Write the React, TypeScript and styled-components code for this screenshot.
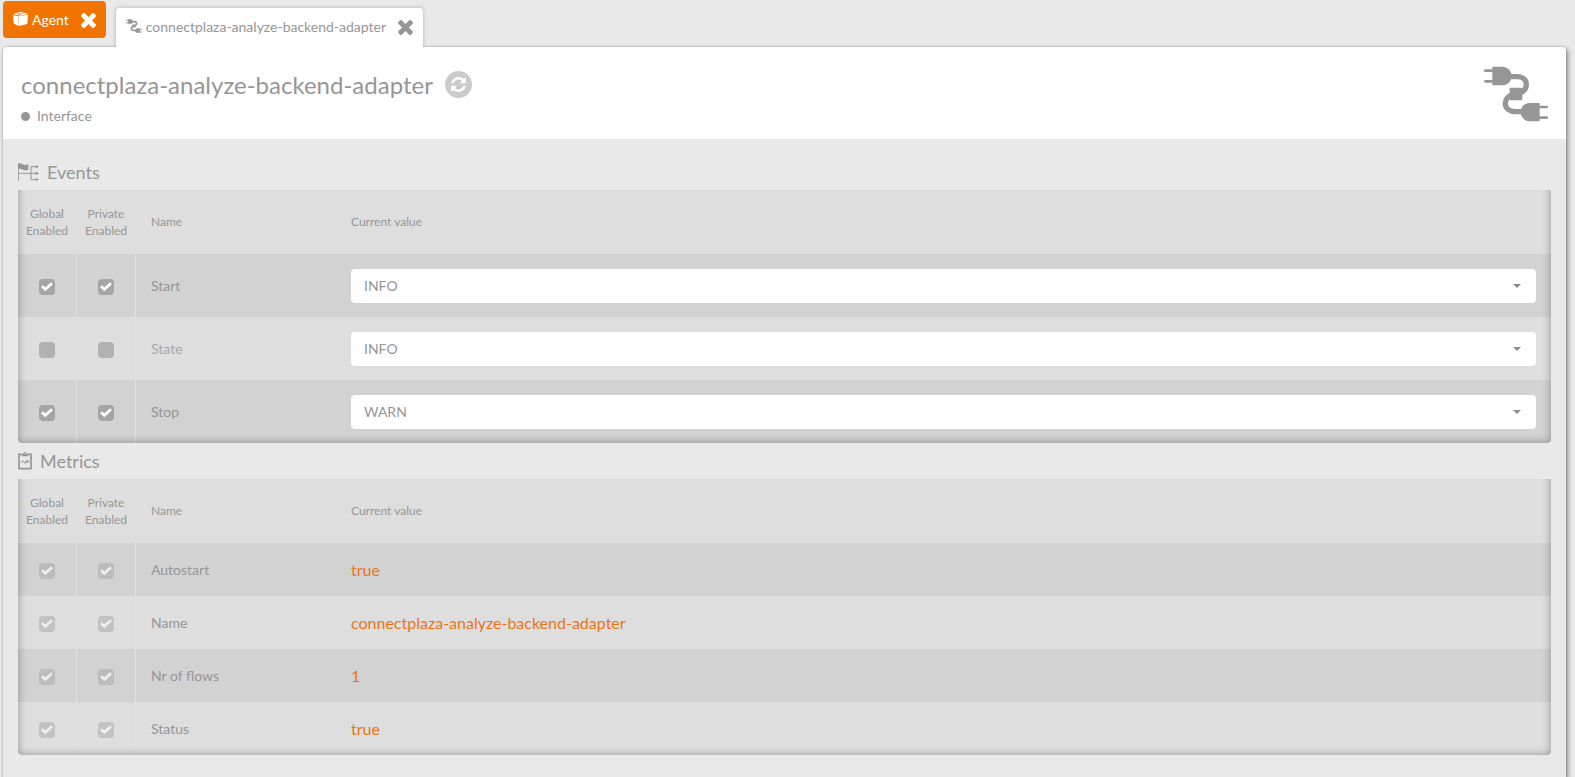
import React, { useState } from 'react';
import styled, { createGlobalStyle } from 'styled-components';

const GlobalStyle = createGlobalStyle`
  *, *::before, *::after { box-sizing: border-box; }
  body {
    margin: 0;
    background: #e9e9e9;
    color: #969696;
    font-family: Lato, "Liberation Sans", sans-serif;
    font-size: 14px;
    line-height: 20px;
  }
  button, select, input { font: inherit; color: inherit; margin: 0; }
`;

const Page = styled.div`
  display: flex;
  flex-direction: column;
  min-height: 100vh;
  padding: 1px 9px 0 3px;
`;

const TabBar = styled.nav`
  display: flex;
  align-items: flex-start;
  gap: 10px;
`;

const Tab = styled.div<{ $active?: boolean }>`
  display: flex;
  align-items: flex-start;
  position: relative;
  z-index: 1;
  height: ${p => (p.$active ? 39 : 37)}px;
  margin-top: ${p => (p.$active ? 7 : 0)}px;
  padding: 9px 10px 0;
  border-radius: ${p => (p.$active ? '4px 4px 0 0' : '4px')};
  background: ${p => (p.$active ? '#fff' : '#f17400')};
  color: ${p => (p.$active ? '#969696' : '#fff')};
  box-shadow: ${p => (p.$active ? '0 0 4px rgba(0, 0, 0, 0.25)' : 'none')};
  clip-path: ${p => (p.$active ? 'inset(-6px -6px 0 -6px)' : 'none')};
`;

const TabLink = styled.a`
  display: flex;
  align-items: flex-start;
  gap: 4px;
  color: inherit;
  text-decoration: none;

  svg { margin-top: 2px; }
`;

const CloseButton = styled.button`
  display: flex;
  margin-left: 12px;
  padding: 3px 0 0;
  border: 0;
  background: none;
  cursor: pointer;
`;

const Panel = styled.main`
  flex: 1;
  border-radius: 4px 4px 0 0;
  background: #e9e9e9;
  box-shadow: 0 0 2px rgba(0, 0, 0, 0.3), 2px 2px 5px rgba(0, 0, 0, 0.4);
`;

const PanelHeader = styled.header`
  display: flex;
  justify-content: space-between;
  align-items: flex-start;
  padding: 19px 18px 13px;
  border-radius: 4px 4px 0 0;
  background: #fff;
`;

const Heading = styled.div`
  display: flex;
  flex-direction: column;
  gap: 7px;
  padding-top: 5px;
`;

const TitleRow = styled.div`
  display: flex;
  align-items: flex-start;
  gap: 12px;
  height: 28px;
`;

const Title = styled.h1`
  margin: 0;
  font-size: 24px;
  font-weight: 400;
  line-height: 28px;
`;

const RefreshButton = styled.button`
  display: grid;
  place-items: center;
  width: 27px;
  height: 27px;
  padding: 0;
  border: 0;
  border-radius: 50%;
  background: #cbcbcb;
  color: #fff;
  cursor: pointer;
`;

const Kind = styled.p`
  display: flex;
  align-items: center;
  gap: 7px;
  margin: 0;
`;

const Dot = styled.span`
  width: 9px;
  height: 9px;
  border-radius: 50%;
  background: #969696;
`;

const PanelBody = styled.div`
  padding: 15px 15px 23px;
`;

const SectionTitle = styled.h2`
  display: flex;
  align-items: center;
  gap: 8px;
  margin: 0;
  padding: 7px 0;
  font-size: 18px;
  font-weight: 400;
  line-height: 22px;
`;

const TableFrame = styled.div`
  position: relative;
  overflow: hidden;
  border-radius: 0 0 4px 4px;

  &::after {
    content: '';
    position: absolute;
    inset: -12px 0 0;
    border-radius: 0 0 4px 4px;
    box-shadow: inset 0 0 8px rgba(0, 0, 0, 0.35);
    pointer-events: none;
  }
`;

const Table = styled.table`
  width: 100%;
  border-spacing: 0;
  table-layout: fixed;
`;

const FlagCol = styled.col`
  width: 59px;
`;

const NameCol = styled.col`
  width: 200px;
`;

const HeadCell = styled.th<{ $center?: boolean }>`
  height: 64px;
  padding: ${p => (p.$center ? '0 1px 0 0' : '0 15px 2px')};
  background: #dedede;
  font-size: 12px;
  font-weight: 400;
  line-height: 17px;
  text-align: ${p => (p.$center ? 'center' : 'left')};
`;

const Row = styled.tr<{ $tall?: boolean }>`
  height: ${p => (p.$tall ? 63 : 53)}px;
  background: #dedede;

  &:nth-child(odd) { background: #d2d2d2; }
`;

const FlagCell = styled.td`
  padding: 3px 0 0;
  border-right: 1px solid #e1e1e1;
`;

const Cell = styled.td<{ $muted?: boolean }>`
  padding: 0 15px;
  opacity: ${p => (p.$muted ? 0.75 : 1)};
`;

const MetricValue = styled.td`
  padding: 0 15px;
  color: #ed7414;
  font-size: 16px;
`;

const Tick = styled.label`
  display: grid;
  place-items: center;
  width: 16px;
  height: 16px;
  margin: 0 auto;

  > * { grid-area: 1 / 1; }
  svg { visibility: hidden; color: #fff; pointer-events: none; z-index: 1; }
  input:checked + svg { visibility: visible; }
  input:disabled + svg { opacity: 0.75; }
`;

const TickInput = styled.input`
  appearance: none;
  width: 16px;
  height: 16px;
  border-radius: 4px;
  background: #b1b1b1;

  &:checked { background: #a5a5a5; }
  &:disabled { opacity: 0.5; }
`;

const SelectBox = styled.div`
  display: grid;
  align-items: center;

  > * { grid-area: 1 / 1; }
  svg { justify-self: end; margin-right: 15px; pointer-events: none; }
`;

const Select = styled.select`
  appearance: none;
  width: 100%;
  height: 34px;
  padding: 0 32px 0 13px;
  border: 0;
  border-radius: 4px;
  background: #fff;
`;

const CloseIcon = () => (
  <svg width="15" height="15" viewBox="302 366 1188 1188" fill="currentColor" aria-hidden="true">
    <path d="M1490 1322q0 40-28 68l-136 136q-28 28-68 28t-68-28l-294-294-294 294q-28 28-68 28t-68-28l-136-136q-28-28-28-68t28-68l294-294-294-294q-28-28-28-68t28-68l136-136q28-28 68-28t68 28l294 294 294-294q28-28 68-28t68 28l136 136q28 28 28 68t-28 68l-294 294 294 294q28 28 28 68z" />
  </svg>
);

const CheckIcon = () => (
  <svg width="12" height="10" viewBox="0 0 36 30" aria-hidden="true">
    <path d="M3 13 13 22 33 4" fill="none" stroke="currentColor" strokeWidth="8" />
  </svg>
);

const RefreshIcon = () => (
  <svg width="15" height="15" viewBox="0 0 1536 1536" fill="currentColor" aria-hidden="true">
    <path d="M1511 928q0 5-1 7-64 268-268 434.5T764 1536q-146 0-282.5-55T238 1324l-129 129q-19 19-45 19t-45-19-19-45V960q0-26 19-45t45-19h448q26 0 45 19t19 45-19 45l-137 137q71 66 161 102t187 36q134 0 250-65t186-179q11-17 53-117 8-23 30-23h192q13 0 22.5 9.5t9.5 22.5zm25-800v448q0 26-19 45t-45 19h-448q-26 0-45-19t-19-45 19-45l138-138Q969 256 768 256q-134 0-250 65T332 500q-11 17-53 117-8 23-30 23H50q-13 0-22.5-9.5T18 608v-7q65-268 270-434.5T768 0q146 0 284 55.5T1297 212l130-129q19-19 45-19t45 19 19 45z" />
  </svg>
);

const BoxIcon = () => (
  <svg width="15" height="14" viewBox="0 0 48 42" preserveAspectRatio="none" fill="currentColor" aria-hidden="true">
    <path d="M0 10 16 13V41L6 37Q3 36 2 33Z" />
    <path d="M17 13 48 8 46 33Q46 36 43 37L17 42Z" />
    <path d="M1 7 10 3 19 5 14 10ZM12 2 26 0 36 1 22 5ZM17 10 38 2 48 6 21 11Z" />
  </svg>
);

const PlugIcon = ({ width, height, prong = 8 }: { width: number; height: number; prong?: number }) => (
  <svg width={width} height={height} viewBox="0 0 192 166" aria-hidden="true">
    <g fill="none" stroke="#969696">
      <path d="M4 13H28M4 45H28M166 122H188M166 154H188" strokeWidth={prong} strokeLinecap="round" />
      <path d="M78 31H98C118 31 127 42 127 55C127 68 119 76 104 82M92 83C72 88 64 98 64 111C64 127 77 136 94 136H114" strokeWidth={prong + 8} />
    </g>
    <g fill="#969696">
      <path d="M27 1H55C71 1 83 14 83 29S71 57 55 57H27Q25 57 25 54V4Q25 1 27 1Z" />
      <path d="M165 110H138C122 110 110 122 110 137S122 165 138 165H165Q167 165 167 162V113Q167 110 165 110Z" />
      <rect x="77" y="64" width="38" height="38" rx="3" />
    </g>
  </svg>
);

const EventsIcon = () => (
  <svg width="21" height="18" viewBox="0 0 63 54" aria-hidden="true">
    <path d="M1 2V54M1 31H58M39 10V50M39 11H57M39 50H57" fill="none" stroke="#969696" strokeWidth="3" />
    <path d="M0 1Q8 0 14 4T31 4V20Q22 24 15 20T0 18Z" fill="#969696" />
    <path d="M53 6 63 11 53 16ZM53 26 63 31 53 36ZM53 45 63 50 53 54Z" fill="#969696" />
  </svg>
);

const MetricsIcon = () => (
  <svg width="14" height="18" viewBox="0 0 42 54" aria-hidden="true">
    <g fill="none" stroke="#969696">
      <path d="M12 7H3V50H39V7H30" strokeWidth="5" />
      <path d="M9 33 15 26 22 34 27 24 29 33 34 26" strokeWidth="3" />
    </g>
    <path d="M12 13V5H16Q16 0 21 0T26 5H30V13Z" fill="#969696" />
    <circle cx="21" cy="5" r="2" fill="#e9e9e9" />
  </svg>
);

const CaretIcon = () => (
  <svg width="8" height="4" viewBox="0 0 8 4" aria-hidden="true">
    <path d="M0 0H8L4 4Z" fill="#8c8c8c" />
  </svg>
);

type FlagProps = { label: string; initial?: boolean; disabled?: boolean };

const Flag = ({ label, initial = false, disabled }: FlagProps) => {
  const [on, setOn] = useState(initial);
  return (
    <FlagCell>
      <Tick>
        <TickInput type="checkbox" aria-label={label} checked={on} disabled={disabled} onChange={e => setOn(e.target.checked)} />
        <CheckIcon />
      </Tick>
    </FlagCell>
  );
};

const TableHead = () => (
  <>
    <colgroup>
      <FlagCol />
      <FlagCol />
      <NameCol />
      <col />
    </colgroup>
    <thead>
      <tr>
        <HeadCell $center scope="col">Global<br />Enabled</HeadCell>
        <HeadCell $center scope="col">Private<br />Enabled</HeadCell>
        <HeadCell scope="col">Name</HeadCell>
        <HeadCell scope="col">Current value</HeadCell>
      </tr>
    </thead>
  </>
);

const events = [
  { name: 'Start', enabled: true, level: 'INFO' },
  { name: 'State', enabled: false, level: 'INFO' },
  { name: 'Stop', enabled: true, level: 'WARN' },
];

const metrics = [
  { name: 'Autostart', value: 'true' },
  { name: 'Name', value: 'connectplaza-analyze-backend-adapter' },
  { name: 'Nr of flows', value: '1' },
  { name: 'Status', value: 'true' },
];

export default function App() {
  return (
    <Page>
      <GlobalStyle />
      <TabBar aria-label="Open items">
        <Tab>
          <TabLink href="#agent"><BoxIcon />Agent</TabLink>
          <CloseButton type="button" aria-label="Close Agent"><CloseIcon /></CloseButton>
        </Tab>
        <Tab $active>
          <TabLink href="#adapter" aria-current="page">
            <PlugIcon width={16} height={14} prong={12} />
            connectplaza-analyze-backend-adapter
          </TabLink>
          <CloseButton type="button" aria-label="Close adapter"><CloseIcon /></CloseButton>
        </Tab>
      </TabBar>
      <Panel>
        <PanelHeader>
          <Heading>
            <TitleRow>
              <Title>connectplaza-analyze-backend-adapter</Title>
              <RefreshButton type="button" aria-label="Refresh"><RefreshIcon /></RefreshButton>
            </TitleRow>
            <Kind><Dot />Interface</Kind>
          </Heading>
          <PlugIcon width={64} height={56} />
        </PanelHeader>
        <PanelBody>
          <section>
            <SectionTitle><EventsIcon />Events</SectionTitle>
            <TableFrame>
              <Table>
                <TableHead />
                <tbody>
                  {events.map(event => (
                    <Row key={event.name} $tall>
                      <Flag label={`${event.name} global enabled`} initial={event.enabled} />
                      <Flag label={`${event.name} private enabled`} initial={event.enabled} />
                      <Cell $muted={!event.enabled}>{event.name}</Cell>
                      <Cell>
                        <SelectBox>
                          <Select aria-label={`${event.name} level`} defaultValue={event.level}>
                            <option>INFO</option>
                            <option>WARN</option>
                            <option>ERROR</option>
                          </Select>
                          <CaretIcon />
                        </SelectBox>
                      </Cell>
                    </Row>
                  ))}
                </tbody>
              </Table>
            </TableFrame>
          </section>
          <section>
            <SectionTitle><MetricsIcon />Metrics</SectionTitle>
            <TableFrame>
              <Table>
                <TableHead />
                <tbody>
                  {metrics.map(metric => (
                    <Row key={metric.name}>
                      <Flag label={`${metric.name} global enabled`} initial disabled />
                      <Flag label={`${metric.name} private enabled`} initial disabled />
                      <Cell>{metric.name}</Cell>
                      <MetricValue>{metric.value}</MetricValue>
                    </Row>
                  ))}
                </tbody>
              </Table>
            </TableFrame>
          </section>
        </PanelBody>
      </Panel>
    </Page>
  );
}
